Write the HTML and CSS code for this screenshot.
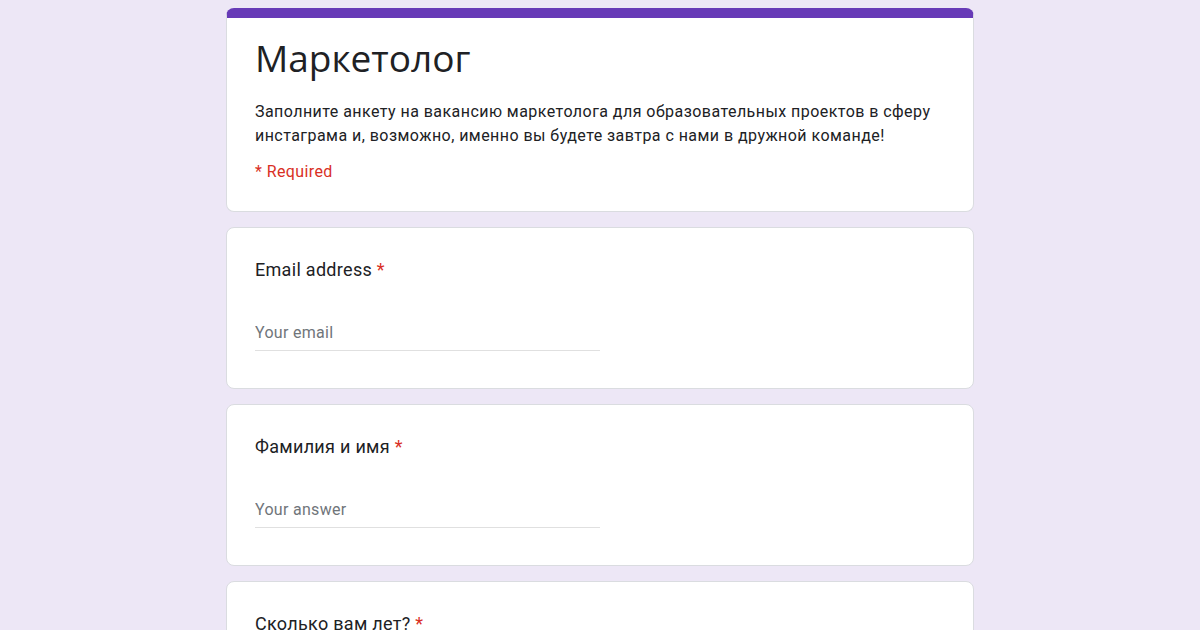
FILE: index.html
```html
<!DOCTYPE html>
<html lang="ru">
<head>
    <meta charset="UTF-8">
    <meta name="viewport" content="width=device-width, initial-scale=1.0">
    <title>Маркетолог</title>
    <link rel="stylesheet" href="styles.css">
</head>
<body>
    <div id="container">
        <div class="card header-card">
            <h1>Маркетолог</h1>
            <p class="description">Заполните анкету на вакансию маркетолога для образовательных проектов в сферу инстаграма и, возможно, именно вы будете завтра с нами в дружной команде!</p>
            <p class="required-note">* Required</p>
        </div>

        <div class="card question">
            <div class="question-title">Email address <span class="star">*</span></div>
            <input type="email" class="answer" placeholder="Your email">
        </div>

        <div class="card question">
            <div class="question-title">Фамилия и имя <span class="star">*</span></div>
            <input type="text" class="answer" placeholder="Your answer">
        </div>

        <div class="card question">
            <div class="question-title">Сколько вам лет? <span class="star">*</span></div>
            <input type="text" class="answer" placeholder="Your answer">
        </div>
    </div>
</body>
</html>
```

FILE: styles.css
```css
body {
    font-family: Roboto, Arial, sans-serif;
    background-color: #ede7f6;
    color: #202124;
    margin: 0;
    padding: 0;
}

#container {
    width: 748px;
    margin: 8px auto 0;
}

.card {
    background-color: #fff;
    border: 1px solid #dadce0;
    border-radius: 8px;
    padding: 0 28px;
    margin-bottom: 15px;
}

.header-card {
    border-top: 10px solid #673ab7;
    padding-top: 16px;
    padding-bottom: 27px;
}

h1 {
    font-family: "Open Sans", Roboto, sans-serif;
    font-weight: 400;
    font-size: 37px;
    line-height: 48px;
    margin: 0 0 18px;
}

.description {
    font-size: 16px;
    line-height: 24px;
    letter-spacing: 0.45px;
    margin: 0 0 12px;
    color: #202124;
}

.required-note {
    color: #d93025;
    font-size: 16px;
    line-height: 24px;
    letter-spacing: 0.4px;
    margin: 0;
}

.question {
    padding-top: 30px;
    padding-bottom: 37px;
}

.question-title {
    font-size: 18px;
    line-height: 24px;
    letter-spacing: 0.3px;
    margin-bottom: 39px;
}

.star {
    color: #d93025;
}

.answer {
    display: block;
    width: 345px;
    box-sizing: border-box;
    border: none;
    border-bottom: 1px solid #e0e0e0;
    font-family: Roboto, Arial, sans-serif;
    font-size: 16px;
    line-height: 24px;
    letter-spacing: 0.3px;
    padding: 0 0 5px;
    outline: none;
}

.answer::placeholder {
    color: #70757a;
}
```
